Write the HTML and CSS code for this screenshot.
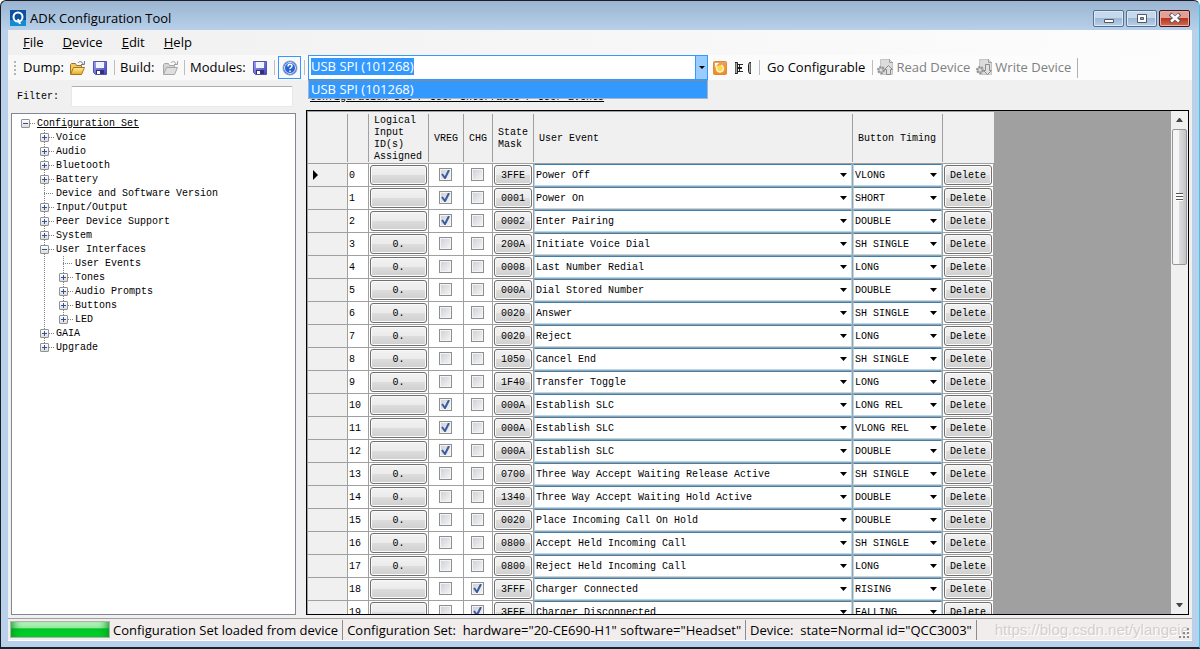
FILE: index.html
```html
<!DOCTYPE html>
<html lang="en">
<head>
    <meta charset="UTF-8">
    <meta name="viewport" content="width=device-width, initial-scale=1.0">
    <title>ADK Configuration Tool</title>
    <link rel="stylesheet" href="styles.css">
</head>
<body>
    <svg class="defs" aria-hidden="true">
        <defs>
            <linearGradient id="saveFill" x1="0" y1="0" x2="1" y2="1">
                <stop offset="0" stop-color="#a4a4f4"/>
                <stop offset="1" stop-color="#4040b8"/>
            </linearGradient>
            <linearGradient id="folderFill" x1="0" y1="0" x2="0" y2="1">
                <stop offset="0" stop-color="#ffeb9c"/>
                <stop offset="1" stop-color="#e9a820"/>
            </linearGradient>
            <linearGradient id="orangeFill" x1="0" y1="0" x2="0" y2="1">
                <stop offset="0" stop-color="#e9a35c"/>
                <stop offset="1" stop-color="#f08a1c"/>
            </linearGradient>
            <symbol id="save" viewBox="0 0 16 16">
                <path d="M1.500 1.500h13v13h-11l-2-2z" fill="url(#saveFill)" stroke="#5454ac"/>
                <path d="M4 2h8v6H4z" fill="#f0f4ff"/>
                <path d="M4 10h8v4H4z" fill="#30307c"/>
                <path d="M5 11h3v3H5z" fill="#fff"/>
            </symbol>
            <symbol id="folder" viewBox="0 0 16 16">
                <path d="M1.500 14V4.500l1-1h4l1 2h5V8" fill="#f0c868" stroke="#9a7424"/>
                <path d="M1.500 14.500L4.500 7.500h11l-3 7z" fill="url(#folderFill)" stroke="#a87818"/>
                <path d="M9 3c1-2 4-2 5 1M15.500 1v3.500H12" fill="none" stroke="#6c7c94"/>
            </symbol>
            <symbol id="folderOff" viewBox="0 0 16 16">
                <path d="M1.500 14V4.500l1-1h4l1 2h5V8" fill="#d4d4d4" stroke="#a8a8a8"/>
                <path d="M1.500 14.500L4.500 7.500h11l-3 7z" fill="#dedede" stroke="#a8a8a8"/>
                <path d="M9 3c1-2 4-2 5 1M15.500 1v3.500H12" fill="none" stroke="#a0a0a0"/>
            </symbol>
            <symbol id="chip" viewBox="0 0 16 16">
                <path d="M3.500.5h9l3 3v12h-12z" fill="#dcdcdc" stroke="#c4c4c4"/>
                <path d="M12.500 0v3.500H16" fill="none" stroke="#a0a0a0"/>
                <circle cx="4" cy="11" r="3" fill="#b8b8b8" stroke="#949494" stroke-width="2" stroke-dasharray="2 1"/>
                <circle cx="4" cy="11" r="1" fill="#eee"/>
            </symbol>
        </defs>
    </svg>

    <div class="window">
        <header class="titlebar">
            <svg class="app-icon" viewBox="0 0 16 16">
                <path d="M0 0h16v16H0z" fill="#0c50a4"/>
                <path d="M0 10h16v6H0z" fill="#178bd0"/>
                <circle cx="8" cy="7" r="4.500" fill="none" stroke="#fff" stroke-width="2"/>
                <path d="M8 9l2 5" stroke="#fff" stroke-width="2"/>
            </svg>
            <h1>ADK Configuration Tool</h1>
            <div class="window-buttons">
                <button type="button" aria-label="Minimize">
                    <svg viewBox="0 0 12 12"><path d="M1.500 7.500h9v3h-9z" fill="#fff" stroke="#535666"/></svg>
                </button>
                <button type="button" aria-label="Maximize">
                    <svg viewBox="0 0 12 12"><path d="M1.500 2.500h9v8h-9z" fill="#fff" stroke="#535666"/><path d="M4.500 5.500h3v2h-3z" fill="#8fb0d4" stroke="#535666"/></svg>
                </button>
                <button type="button" class="close" aria-label="Close">
                    <svg viewBox="0 0 12 12"><path d="M1 2l10 8M11 2L1 10" stroke="#535666" stroke-width="4"/><path d="M2 2.500l8 7M10 2.500l-8 7" stroke="#fff" stroke-width="2.500"/></svg>
                </button>
            </div>
        </header>

        <div class="client">
            <nav class="menu">
                <button type="button"><u>F</u>ile</button>
                <button type="button"><u>D</u>evice</button>
                <button type="button"><u>E</u>dit</button>
                <button type="button"><u>H</u>elp</button>
            </nav>

            <div class="toolbar">
                <span class="grip"></span>
                <span class="tool-label dump">Dump:</span>
                <button type="button" class="tool" aria-label="Open dump"><svg><use href="#folder"/></svg></button>
                <button type="button" class="tool" aria-label="Save dump"><svg><use href="#save"/></svg></button>
                <span class="sep"></span>
                <span class="tool-label build">Build:</span>
                <button type="button" class="tool" aria-label="Open build" disabled><svg><use href="#folderOff"/></svg></button>
                <span class="sep"></span>
                <span class="tool-label modules">Modules:</span>
                <button type="button" class="tool" aria-label="Save modules"><svg><use href="#save"/></svg></button>
                <span class="sep"></span>
                <button type="button" class="tool help" aria-label="Help">
                    <svg viewBox="0 0 16 16">
                        <circle cx="8" cy="8" r="7" fill="#2a62d4" stroke="#8ea4cc"/>
                        <circle cx="8" cy="8" r="5.500" fill="none" stroke="#dce8ff"/>
                        <path d="M6 6.500c0-3 4-3 4-.5 0 1.500-2 1.500-2 3M8 10.500v1.500" fill="none" stroke="#fff" stroke-width="1.500"/>
                    </svg>
                </button>
                <span class="sep"></span>
                <div class="combo">
                    <input type="text" id="transport" value="USB SPI (101268)" aria-label="Transport" role="combobox" aria-expanded="true" aria-controls="transportList">
                    <button type="button" aria-label="Show transports"></button>
                    <ul class="combo-list" id="transportList" role="listbox">
                        <li role="option" aria-selected="true">USB SPI (101268)</li>
                    </ul>
                </div>
                <button type="button" class="tool refresh" aria-label="Refresh">
                    <svg viewBox="0 0 16 16">
                        <rect x="1.500" y="1.500" width="13" height="13" rx="1" fill="url(#orangeFill)" stroke="#dc8a3c"/>
                        <path d="M4.500 6v3c1 4 6 4 7 0 0-2-1-3-2-4" fill="#ffd84c" stroke="#fff3c0" stroke-width="1.500"/>
                        <path d="M3 7V3h4z" fill="#fff"/>
                    </svg>
                </button>
                <button type="button" class="tool plug" aria-label="Connect">
                    <svg viewBox="0 0 16 16">
                        <path d="M0 2.500h2.500v11H0zM2.500 4.500H8M2.500 7.500H7M2.500 8.500H7M2.500 11.500H8M4.500 4v8M16 2.500h-1.500l-1 2v7l1 2H16z" fill="#aaa" stroke="#222"/>
                    </svg>
                </button>
                <span class="sep"></span>
                <button type="button" class="text-tool go">Go Configurable</button>
                <span class="sep"></span>
                <button type="button" class="text-tool" disabled>
                    <svg viewBox="0 0 16 16"><use href="#chip"/><path d="M11.500 6.500l4 4h-2v5h-4v-5h-2z" fill="#e0e0e0" stroke="#8c8c8c"/></svg>Read Device
                </button>
                <button type="button" class="text-tool" disabled>
                    <svg viewBox="0 0 16 16"><use href="#chip"/><path d="M9.500 5.500h4v6h2l-4 4-4-4h2z" fill="#e0e0e0" stroke="#8c8c8c"/></svg>Write Device
                </button>
                <span class="toolbar-end"></span>
            </div>

            <main class="content">
                <aside class="side">
                    <div class="filter">
                        <label for="filter">Filter:</label>
                        <input type="text" id="filter">
                    </div>
                    <div class="tree" id="tree"></div>
                </aside>

                <section class="panel">
                    <h2>Configuration Set / User Interfaces / User Events</h2>
                    <div class="grid">
                        <div class="grid-view">
                            <table>
                                <colgroup>
                                    <col class="col-mark"><col class="col-num"><col class="col-input"><col class="col-vreg"><col class="col-chg"><col class="col-mask"><col class="col-event"><col class="col-timing"><col class="col-delete">
                                </colgroup>
                                <thead>
                                    <tr>
                                        <th></th>
                                        <th></th>
                                        <th>Logical Input ID(s) Assigned</th>
                                        <th>VREG</th>
                                        <th>CHG</th>
                                        <th>State Mask</th>
                                        <th>User Event</th>
                                        <th>Button Timing</th>
                                        <th></th>
                                    </tr>
                                </thead>
                                <tbody id="events"></tbody>
                            </table>
                        </div>
                        <div class="scrollbar" aria-hidden="true">
                            <span class="arrow up"></span>
                            <span class="thumb"><i></i></span>
                            <span class="arrow down"></span>
                        </div>
                    </div>
                </section>
            </main>

            <footer class="status">
                <progress value="100" max="100" aria-label="Load progress"></progress>
                <span class="status-load">Configuration Set loaded from device</span>
                <span class="status-set">Configuration Set:&nbsp; hardware="20-CE690-H1" software="Headset"</span>
                <span class="status-device">Device:&nbsp; state=Normal id="QCC3003"</span>
                <span class="mark">https://blog.csdn.net/ylangeie</span>
                <svg class="size-grip" viewBox="0 0 12 12"><path d="M9 0h2v2H9zM5 4h2v2H5zM9 4h2v2H9zM1 8h2v2H1zM5 8h2v2H5zM9 8h2v2H9z" fill="#8c8c8c"/></svg>
            </footer>
        </div>
    </div>

    <script src="script.js"></script>
</body>
</html>
```
FILE: styles.css
```css
* {
    box-sizing: border-box;
}
body {
    margin: 0;
    font-family: "Open Sans", "Noto Sans", sans-serif;
    font-size: 13px;
    color: #000;
}
button, input, select {
    font: inherit;
    color: inherit;
    margin: 0;
    padding: 0;
}
button {
    border: none;
    background: none;
}
h1, h2, ul {
    margin: 0;
    padding: 0;
    font-size: inherit;
    font-weight: normal;
    list-style: none;
}
.defs {
    position: absolute;
    width: 0;
    height: 0;
}

/* window frame */
.window {
    display: flex;
    flex-direction: column;
    height: 100vh;
    padding: 0 6px 6px;
    border: 1px solid #1c1c24;
    border-right-color: #38c8e8;
    border-bottom: 2px solid #16242c;
    border-radius: 6px 6px 0 0;
    background: linear-gradient(#9ab4d1, #b9d1ea 30px);
}
.titlebar {
    display: flex;
    align-items: center;
    height: 29px;
    padding: 5px 3px 0;
    gap: 4px;
}
.titlebar h1 {
    flex: 1;
    line-height: 18px;
}
.app-icon {
    width: 16px;
    height: 16px;
}
.window-buttons {
    display: flex;
    gap: 2px;
}
.window-buttons button {
    display: flex;
    align-items: center;
    justify-content: center;
    width: 31px;
    height: 17px;
    border: 1px solid #53708f;
    border-radius: 2px;
    box-shadow: inset 0 0 0 1px #dbe8f5;
    background: linear-gradient(#c6d8ec 50%, #9db8d5 50%, #b9d1ea);
}
.window-buttons svg {
    width: 12px;
    height: 12px;
}
.window-buttons .close {
    border-color: #431421;
    box-shadow: inset 0 0 0 1px #e8b0a4;
    background: linear-gradient(#e2a094 50%, #b9351c 50%, #d06c50);
}
.client {
    display: flex;
    flex: 1;
    flex-direction: column;
    min-height: 0;
    margin: 0 1px;
    background: #f0f0f0;
}

/* menu and toolbar */
.menu {
    display: flex;
    gap: 19px;
    height: 25px;
    padding: 0 15px 1px;
    background: linear-gradient(to right, #f0f0f0, #fdfdfd);
}
.toolbar {
    display: flex;
    align-items: center;
    height: 25px;
    padding-left: 6px;
    background: linear-gradient(to right, #f8f8f8, #fdfdfd);
}
.grip {
    width: 2px;
    height: 14px;
    margin-right: 7px;
    background: repeating-linear-gradient(#b4b4b4 0 2px, transparent 2px 4px);
}
.tool-label {
    flex: none;
    padding-bottom: 2px;
    white-space: nowrap;
}
.dump {
    width: 42px;
}
.build {
    width: 38px;
}
.modules {
    width: 58px;
}
.tool {
    display: flex;
    flex: none;
    align-items: center;
    justify-content: center;
    width: 23px;
    height: 23px;
}
.tool svg, .text-tool svg {
    width: 16px;
    height: 16px;
}
.sep {
    flex: none;
    width: 1px;
    height: 15px;
    margin: 0 5px 0 3px;
    background: #bdbdbd;
}
.help {
    margin-left: -2px;
    border: 1px solid #3399ff;
}
.help + .sep {
    margin-right: 3px;
}
.combo {
    position: relative;
    display: flex;
    flex: 0 1 400px;
    height: 25px;
    border: 1px solid #3399ff;
    background: #fff;
}
.combo input {
    flex: 1;
    min-width: 0;
    height: 17px;
    margin: 2px;
    border: none;
    outline: none;
    background: none;
    line-height: 17px;
}
.combo input::selection {
    background: #3399ff;
    color: #fff;
}
.combo button {
    display: flex;
    align-items: center;
    justify-content: center;
    width: 12px;
    border-left: 1px solid #3399ff;
    background: #99ccff;
}
.combo button::after {
    content: "";
    border: 3px solid transparent;
    border-top-color: #000;
    border-bottom: none;
}
.combo-list {
    position: absolute;
    top: 24px;
    left: -1px;
    right: -1px;
    z-index: 2;
    border: 1px solid #a0b8d0;
    border-top-color: #7c8c9c;
}
.combo-list li {
    height: 17px;
    padding-left: 2px;
    background: #3399ff;
    color: #fff;
    line-height: 17px;
}
.plug {
    margin-right: 2px;
}
.text-tool {
    display: flex;
    flex: none;
    align-items: center;
    gap: 3px;
    padding-bottom: 1px;
    white-space: nowrap;
}
.text-tool:disabled {
    margin-right: 6px;
    color: #808080;
}
.go {
    margin: 0 4px 0 2px;
}
.go + .sep {
    margin-right: 4px;
}
.toolbar-end {
    width: 1px;
    height: 20px;
    background: #b0b0b0;
}

/* content */
.content {
    display: flex;
    flex: 1;
    gap: 10px;
    min-height: 0;
    padding: 0 3px;
    font-family: "Liberation Mono", monospace;
    font-size: 10px;
    line-height: 12px;
}
.side {
    display: flex;
    flex: none;
    flex-direction: column;
    width: 285px;
    padding-bottom: 3px;
}
.filter {
    display: flex;
    align-items: center;
    gap: 12px;
    height: 33px;
    padding: 0 3px 0 6px;
}
.filter input {
    flex: 1;
    min-width: 0;
    height: 21px;
    border: 1px solid #e3e9ef;
    border-top-color: #abadb3;
    border-radius: 2px;
    background: #fff;
}
.tree {
    flex: 1;
    padding: 2px 9px;
    border: 1px solid #828790;
    background: #fff;
}
.tree ul ul {
    padding-left: 19px;
}
.tree ul ul > li {
    background: repeating-linear-gradient(#808080 0 1px, transparent 1px 2px) 4px 0 / 1px 100% no-repeat;
}
.tree ul ul > li:last-child {
    background-size: 1px 8px;
}
.node {
    display: flex;
    align-items: center;
    height: 14px;
}
.node a {
    order: 2;
    padding-top: 1px;
    color: inherit;
    text-decoration: none;
}
.tree > ul > li > .node a {
    text-decoration: underline;
}
.node::before {
    content: "";
    order: 1;
    width: 5px;
    height: 1px;
    margin-right: 2px;
    background: repeating-linear-gradient(to right, #808080 0 1px, transparent 1px 2px);
}
.node.leaf::before {
    width: 10px;
    margin-left: 4px;
}
.expander {
    width: 9px;
    height: 9px;
    border: 1px solid #919191;
    border-radius: 1px;
    background:
        linear-gradient(#3050a0, #3050a0) center / 5px 1px no-repeat,
        linear-gradient(#fff, #dcdcdc);
}
.expander.closed {
    background:
        linear-gradient(#3050a0, #3050a0) center / 5px 1px no-repeat,
        linear-gradient(#3050a0, #3050a0) center / 1px 5px no-repeat,
        linear-gradient(#fff, #dcdcdc);
}
.panel {
    display: flex;
    flex: 1;
    flex-direction: column;
    min-width: 0;
    padding-bottom: 3px;
}
.panel h2 {
    height: 30px;
    padding: 12px 4px 0;
    text-decoration: underline;
}
.grid {
    display: flex;
    flex: 1;
    min-height: 0;
    border: 1px solid #000;
    background: #a0a0a0;
}
.grid-view {
    flex: 1;
    min-width: 0;
    overflow: hidden;
    padding: 1px 0 0 1px;
}

/* events table */
table {
    table-layout: fixed;
    width: 686px;
    border-spacing: 0;
    background: #fff;
}
.col-mark { width: 40px; }
.col-num { width: 21px; }
.col-input { width: 60px; }
.col-vreg { width: 35px; }
.col-chg { width: 29px; }
.col-mask { width: 41px; }
.col-event { width: 319px; }
.col-timing { width: 90px; }
.col-delete { width: 51px; }
th {
    height: 52px;
    padding: 3px 0 0 5px;
    border-bottom: 1px solid #a0a0a0;
    background: linear-gradient(#a0a0a0, #a0a0a0) right 2px / 1px 48px no-repeat #f0f0f0;
    font-weight: normal;
    text-align: left;
}
th:last-child {
    background: #f0f0f0;
}
td {
    height: 23px;
    padding: 1px;
    border-right: 1px solid #a0a0a0;
    border-bottom: 1px solid #a0a0a0;
}
td:first-child {
    padding-left: 5px;
    background: #f0f0f0;
}
td:nth-child(2) {
    padding-top: 3px;
}
td.check {
    padding: 0 2px 1px 0;
}
td.pick {
    padding: 0;
}
.current {
    display: block;
    width: 0;
    border: 5px solid transparent;
    border-left-color: #000;
    border-right: none;
}
td button {
    display: block;
    width: 100%;
    height: 20px;
    padding-top: 2px;
    border: 1px solid #707070;
    border-radius: 3px;
    box-shadow: inset 0 0 0 1px #fafafa;
    background: linear-gradient(#f2f2f2, #ebebeb 50%, #dddddd 50%, #cfcfcf);
}
td input {
    display: block;
    width: 13px;
    height: 13px;
    margin: 0 auto;
    appearance: none;
    border: 1px solid #8e8f8f;
    box-shadow: inset 0 0 0 1px #f4f4f4;
    background: linear-gradient(135deg, #cbcfd5, #f6f6f6);
}
td input:checked {
    background:
        url("data:image/svg+xml,%3Csvg xmlns='http://www.w3.org/2000/svg' viewBox='0 0 11 11'%3E%3Cpath d='M2 5l3 4 4-8' fill='none' stroke='%233c5aa0' stroke-width='2'/%3E%3C/svg%3E") center / 11px 11px no-repeat,
        linear-gradient(135deg, #cbcfd5, #f6f6f6);
}
select {
    display: block;
    width: 100%;
    height: 22px;
    padding: 2px 1px 0;
    appearance: none;
    border: 1px solid #b7d9ed;
    border-top-color: #3c7fb1;
    border-radius: 0;
    background:
        url("data:image/svg+xml,%3Csvg xmlns='http://www.w3.org/2000/svg' viewBox='0 0 7 4'%3E%3Cpath d='M0 0h7L3.500 4z'/%3E%3C/svg%3E") right 4px center / 7px 4px no-repeat #fff;
}

/* scrollbar */
.scrollbar {
    display: flex;
    flex-direction: column;
    align-items: center;
    width: 17px;
    background: #f0f0f0;
}
.arrow {
    width: 7px;
    margin: 7px 0;
    border: 3px solid transparent;
}
.arrow.up {
    border-top: none;
    border-bottom: 4px solid #444;
}
.arrow.down {
    margin-top: auto;
    border-bottom: none;
    border-top: 4px solid #444;
}
.thumb {
    display: flex;
    align-items: center;
    justify-content: center;
    width: 15px;
    height: 27%;
    border: 1px solid #979797;
    border-radius: 2px;
    background: linear-gradient(to right, #f5f5f5 45%, #dcdcde 50%, #c4c4c8);
}
.thumb i {
    width: 7px;
    height: 8px;
    background: repeating-linear-gradient(#555 0 1px, #fff 1px 3px);
}

/* status bar */
.status {
    display: flex;
    align-items: center;
    height: 23px;
    padding: 0 2px;
    border-top: 1px solid #a0a0a0;
    border-bottom: 1px solid #fff;
    background: #f1eded;
    white-space: nowrap;
}
.status progress {
    flex: none;
    width: 100px;
    height: 17px;
    margin-right: 3px;
    appearance: none;
    border: 1px solid #b0b0b0;
}
.status progress::-webkit-progress-bar {
    background: #e6e6e6;
}
.status progress::-webkit-progress-value {
    background: linear-gradient(#c8f8c8, #8ce89c 40%, #00c424 45%, #00d42c);
    box-shadow: inset 8px 0 8px -6px #009c1c, inset -8px 0 8px -6px #009c1c;
}
.status span {
    line-height: 20px;
}
.status-load, .status-set, .status-device {
    padding-right: 4px;
    margin-right: 4px;
    border-right: 1px solid #8c8c8c;
}
.status .mark {
    margin-left: auto;
    color: #d2cfcf;
    font-family: "Liberation Sans", sans-serif;
    font-size: 15px;
    text-shadow: 1px 1px #fff;
}
.size-grip {
    flex: none;
    align-self: flex-end;
    width: 12px;
    height: 12px;
    margin-left: -11px;
}
```
FILE: script.js
```js
const tree = [
    ['Configuration Set', [
        ['Voice', []],
        ['Audio', []],
        ['Bluetooth', []],
        ['Battery', []],
        ['Device and Software Version'],
        ['Input/Output', []],
        ['Peer Device Support', []],
        ['System', []],
        ['User Interfaces', [
            ['User Events'],
            ['Tones', []],
            ['Audio Prompts', []],
            ['Buttons', []],
            ['LED', []]
        ]],
        ['GAIA', []],
        ['Upgrade', []]
    ]]
];

// [input ids, VREG, CHG, state mask, event, timing]
const events = [
    ['', 1, 0, '3FFE', 'Power Off', 'VLONG'],
    ['', 1, 0, '0001', 'Power On', 'SHORT'],
    ['', 1, 0, '0002', 'Enter Pairing', 'DOUBLE'],
    ['0.', 0, 0, '200A', 'Initiate Voice Dial', 'SH SINGLE'],
    ['0.', 0, 0, '0008', 'Last Number Redial', 'LONG'],
    ['0.', 0, 0, '000A', 'Dial Stored Number', 'DOUBLE'],
    ['0.', 0, 0, '0020', 'Answer', 'SH SINGLE'],
    ['0.', 0, 0, '0020', 'Reject', 'LONG'],
    ['0.', 0, 0, '1050', 'Cancel End', 'SH SINGLE'],
    ['0.', 0, 0, '1F40', 'Transfer Toggle', 'LONG'],
    ['', 1, 0, '000A', 'Establish SLC', 'LONG REL'],
    ['', 1, 0, '000A', 'Establish SLC', 'VLONG REL'],
    ['', 1, 0, '000A', 'Establish SLC', 'DOUBLE'],
    ['0.', 0, 0, '0700', 'Three Way Accept Waiting Release Active', 'SH SINGLE'],
    ['0.', 0, 0, '1340', 'Three Way Accept Waiting Hold Active', 'DOUBLE'],
    ['0.', 0, 0, '0020', 'Place Incoming Call On Hold', 'DOUBLE'],
    ['0.', 0, 0, '0800', 'Accept Held Incoming Call', 'SH SINGLE'],
    ['0.', 0, 0, '0800', 'Reject Held Incoming Call', 'LONG'],
    ['', 0, 1, '3FFF', 'Charger Connected', 'RISING'],
    ['', 0, 1, '3FFF', 'Charger Disconnected', 'FALLING']
];

function renderTree(nodes) {
    return '<ul>' + nodes.map(([name, children]) => {
        const open = children && children.length;
        const expander = children
            ? `<button type="button" class="expander ${open ? '' : 'closed'}" aria-label="Toggle ${name}"></button>`
            : '';
        return `<li>
            <div class="node ${children ? '' : 'leaf'}">${expander}<a href="#">${name}</a></div>
            ${open ? renderTree(children) : ''}
        </li>`;
    }).join('') + '</ul>';
}

function renderEvents() {
    return events.map(([ids, vreg, chg, mask, name, timing], i) => `
        <tr>
            <td>${i === 0 ? '<span class="current"></span>' : ''}</td>
            <td>${i}</td>
            <td><button type="button" aria-label="Inputs for event ${i}">${ids}</button></td>
            <td class="check"><input type="checkbox" aria-label="VREG ${i}" ${vreg ? 'checked' : ''}></td>
            <td class="check"><input type="checkbox" aria-label="CHG ${i}" ${chg ? 'checked' : ''}></td>
            <td><button type="button">${mask}</button></td>
            <td class="pick"><select aria-label="User event ${i}"><option>${name}</option></select></td>
            <td class="pick"><select aria-label="Button timing ${i}"><option>${timing}</option></select></td>
            <td><button type="button">Delete</button></td>
        </tr>`).join('');
}

document.getElementById('tree').innerHTML = renderTree(tree);
document.getElementById('events').innerHTML = renderEvents();

const transport = document.getElementById('transport');
transport.focus();
transport.select();
```
